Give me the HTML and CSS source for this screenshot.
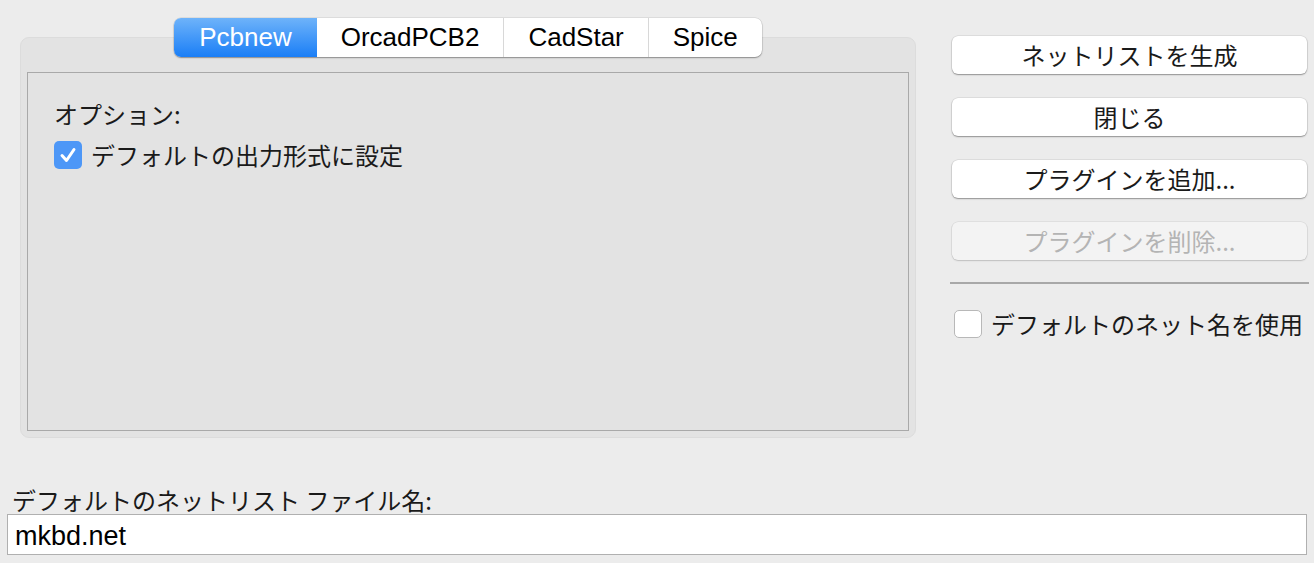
FILE: index.html
```html
<!DOCTYPE html>
<html lang="ja">
<head>
<meta charset="utf-8">
<link rel="stylesheet" href="styles.css">
</head>
<body>
<div class="page">
  <div class="top">
    <div class="left">
      <div class="tabbar">
        <div class="tab active">Pcbnew</div>
        <div class="tab">OrcadPCB2</div>
        <div class="tab">CadStar</div>
        <div class="tab">Spice</div>
      </div>
      <div class="panel">
        <div class="inner">
          <div class="label">オプション:</div>
          <label class="check">
            <span class="box checked">
              <svg viewBox="0 0 28 28" width="28" height="28"><path d="M8 14.5 L12.5 19.5 L20 8.5" fill="none" stroke="#fff" stroke-width="3" stroke-linecap="round" stroke-linejoin="round"/></svg>
            </span>
            <span class="jp">デフォルトの出力形式に設定</span>
          </label>
        </div>
      </div>
    </div>
    <div class="right">
      <div class="btn">ネットリストを生成</div>
      <div class="btn">閉じる</div>
      <div class="btn">プラグインを追加...</div>
      <div class="btn disabled">プラグインを削除...</div>
      <div class="sep"></div>
      <label class="check check-right">
        <span class="box"></span>
        <span class="jp">デフォルトのネット名を使用</span>
      </label>
    </div>
  </div>
  <div class="bottom">
    <div class="flabel">デフォルトのネットリスト ファイル名:</div>
    <div class="input">mkbd.net</div>
  </div>
</div>
</body>
</html>
```
FILE: styles.css
```css
html, body {
  margin: 0;
  padding: 0;
  background: #ececec;
}
body {
  width: 1314px;
  height: 563px;
  overflow: hidden;
  font-family: "Noto Sans CJK JP", "Liberation Sans", sans-serif;
  font-size: 24px;
  color: #1a1a1a;
}
.page {
  display: flex;
  flex-direction: column;
}
.top {
  display: flex;
  padding: 18px 0 0 20px;
  gap: 36px;
}
.left {
  width: 896px;
  display: flex;
  flex-direction: column;
  align-items: center;
}
.tabbar {
  display: flex;
  height: 39px;
  background: #fff;
  border-radius: 7px;
  box-shadow: 0 1px 1.5px rgba(0,0,0,0.35), 0 0 0 0.5px rgba(0,0,0,0.12);
  margin-bottom: -20px;
  position: relative;
  z-index: 1;
  overflow: hidden;
}
.tab {
  font-family: "Liberation Sans", sans-serif;
  font-size: 26px;
  line-height: 39px;
  padding: 0 24px;
  color: #000;
  border-left: 1px solid #d8d8d8;
}
.tab:first-child { border-left: none; }
.tab.active + .tab { border-left: none; }
.tab.active {
  color: #fff;
  background: linear-gradient(#6eb3fa, #1a7ef6);
  padding: 0 25px;
}
.panel {
  align-self: stretch;
  height: 401px;
  box-sizing: border-box;
  background: #e3e3e3;
  border: 1px solid #dcdcdc;
  border-radius: 9px;
  padding: 34px 6px 6px 6px;
  display: flex;
}
.inner {
  flex: 1;
  border: 1px solid #a9a9a9;
  background: #e3e3e3;
  padding: 26px 26px;
}
.label {
  line-height: 30px;
  height: 30px;
}
.check {
  display: flex;
  align-items: center;
  gap: 9px;
  margin-top: 11px;
  line-height: 30px;
}
.box {
  width: 28px;
  height: 28px;
  box-sizing: border-box;
  border-radius: 5px;
  background: #fff;
  border: 1px solid #b8b8b8;
  display: block;
  flex: none;
}
.box.checked {
  background: #4d97f7;
  border: none;
}
.box svg { display: block; }
.right {
  width: 355px;
  display: flex;
  flex-direction: column;
  padding-top: 18px;
}
.btn {
  height: 38px;
  line-height: 37px;
  text-align: center;
  background: #fff;
  border-radius: 6px;
  box-shadow: 0 1px 1.5px rgba(0,0,0,0.35), 0 0 0 0.5px rgba(0,0,0,0.12);
  margin-bottom: 24px;
  color: #1a1a1a;
}
.btn.disabled {
  background: #f3f3f3;
  color: #b4b4b4;
  box-shadow: 0 1px 1.5px rgba(0,0,0,0.15), 0 0 0 0.5px rgba(0,0,0,0.1);
}
.sep {
  height: 2px;
  background: #a8a8a8;
  margin: -2px -2px 0 -2px;
}
.check-right {
  margin-top: 25px;
  padding-left: 2px;
}
.bottom {
  padding: 47px 7px 0 7px;
}
.flabel {
  padding-left: 5px;
  line-height: 29px;
}
.input {
  width: 1300px;
  height: 41px;
  box-sizing: border-box;
  border: 1px solid #b0b0b0;
  background: #fff;
  font-family: "Liberation Sans", sans-serif;
  font-size: 27px;
  line-height: 42px;
  padding-left: 7px;
  color: #000;
}
```
